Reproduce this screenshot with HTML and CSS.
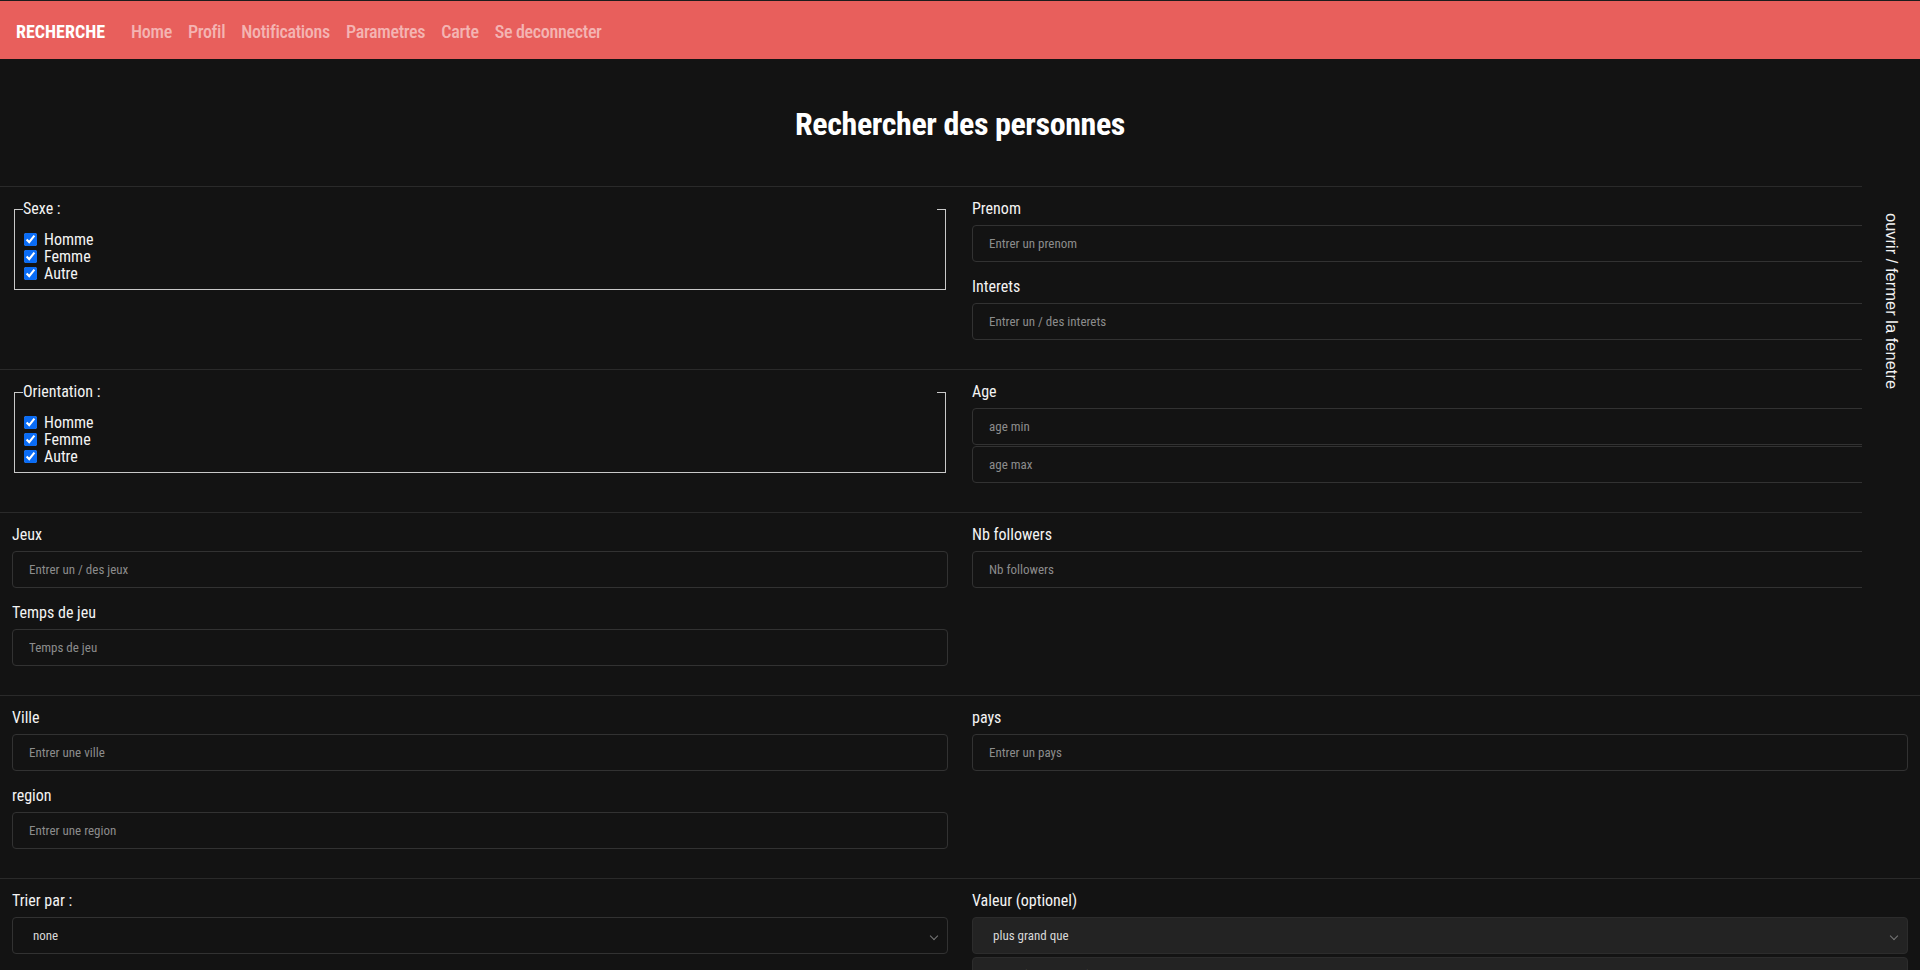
FILE: index.html
```html
<!DOCTYPE html>
<html lang="fr">
<head>
<meta charset="utf-8">
<title>Recherche</title>
<link rel="stylesheet" href="styles.css">
</head>
<body>
<nav class="topbar">
  <a class="brand" href="#">RECHERCHE</a>
  <ul class="nav-links">
    <li><a href="#">Home</a></li>
    <li><a href="#">Profil</a></li>
    <li><a href="#">Notifications</a></li>
    <li><a href="#">Parametres</a></li>
    <li><a href="#">Carte</a></li>
    <li><a href="#">Se deconnecter</a></li>
  </ul>
</nav>

<main class="page">
  <div class="title-wrap"><h1 class="title">Rechercher des personnes</h1></div>

  <section class="row">
    <div class="col">
      <fieldset class="checks">
        <legend>Sexe :</legend>
        <label class="check"><input type="checkbox" checked> Homme</label>
        <label class="check"><input type="checkbox" checked> Femme</label>
        <label class="check"><input type="checkbox" checked> Autre</label>
      </fieldset>
    </div>
    <div class="col">
      <div class="group">
        <label class="lbl">Prenom</label>
        <input class="field" type="text" placeholder="Entrer un prenom">
      </div>
      <div class="group">
        <label class="lbl">Interets</label>
        <input class="field" type="text" placeholder="Entrer un / des interets">
      </div>
    </div>
  </section>

  <section class="row">
    <div class="col">
      <fieldset class="checks">
        <legend>Orientation :</legend>
        <label class="check"><input type="checkbox" checked> Homme</label>
        <label class="check"><input type="checkbox" checked> Femme</label>
        <label class="check"><input type="checkbox" checked> Autre</label>
      </fieldset>
    </div>
    <div class="col">
      <div class="group">
        <label class="lbl">Age</label>
        <input class="field stack" type="text" placeholder="age min">
        <input class="field stack" type="text" placeholder="age max">
      </div>
    </div>
  </section>

  <section class="row">
    <div class="col">
      <div class="group">
        <label class="lbl">Jeux</label>
        <input class="field" type="text" placeholder="Entrer un / des jeux">
      </div>
      <div class="group">
        <label class="lbl">Temps de jeu</label>
        <input class="field" type="text" placeholder="Temps de jeu">
      </div>
    </div>
    <div class="col">
      <div class="group">
        <label class="lbl">Nb followers</label>
        <input class="field" type="text" placeholder="Nb followers">
      </div>
    </div>
  </section>

  <section class="row">
    <div class="col">
      <div class="group">
        <label class="lbl">Ville</label>
        <input class="field" type="text" placeholder="Entrer une ville">
      </div>
      <div class="group">
        <label class="lbl">region</label>
        <input class="field" type="text" placeholder="Entrer une region">
      </div>
    </div>
    <div class="col">
      <div class="group">
        <label class="lbl">pays</label>
        <input class="field" type="text" placeholder="Entrer un pays">
      </div>
    </div>
  </section>

  <section class="row">
    <div class="col">
      <div class="group">
        <label class="lbl">Trier par :</label>
        <div class="select">none</div>
      </div>
    </div>
    <div class="col">
      <div class="group">
        <label class="lbl">Valeur (optionel)</label>
        <div class="select filled">plus grand que</div>
        <input class="field filled second" type="text" placeholder="valeur (dans l'ordre)">
      </div>
    </div>
  </section>
</main>

<aside class="side-toggle">
  <span class="side-text">ouvrir / fermer la fenetre</span>
</aside>
</body>
</html>
```

FILE: styles.css
```css
* { box-sizing: border-box; }

html, body {
  margin: 0;
  padding: 0;
  background: #131313;
  color: #f2f2f2;
  font-family: "Roboto", "Liberation Sans", sans-serif;
  font-stretch: 75%;
  overflow: hidden;
  height: 970px;
}

.topbar {
  border-top: 1px solid #1c1c1c;
  height: 59px;
  background: #e85f5c;
  display: flex;
  align-items: center;
  padding: 2px 16px 0;
}

.brand {
  color: #ffffff;
  text-decoration: none;
  font-weight: bold;
  font-size: 18px;
  margin-right: 18px;
}

.nav-links {
  list-style: none;
  display: flex;
  margin: 0;
  padding: 0;
}

.nav-links a {
  display: block;
  padding: 0 8px;
  color: rgba(255, 255, 255, 0.55);
  text-decoration: none;
  font-size: 18px;
  font-weight: 500;
  letter-spacing: -0.3px;
}

.title-wrap {
  padding: 45px 0 42px;
  text-align: center;
}

.title {
  margin: 0;
  font-size: 32px;
  line-height: 40px;
  font-weight: bold;
  letter-spacing: -0.4px;
  color: #ffffff;
}

.row {
  border-top: 1px solid #2a2a2a;
  display: grid;
  grid-template-columns: 1fr 1fr;
  column-gap: 24px;
  padding: 12px 12px 14px;
}

.col { min-width: 0; }

.group {
  display: flex;
  flex-direction: column;
  margin-bottom: 15px;
}

.lbl {
  font-size: 16px;
  line-height: 20px;
  margin-bottom: 6px;
  color: #f4f4f4;
}

.field, .select {
  height: 37px;
  width: 100%;
  background: transparent;
  border: 1px solid #323232;
  border-radius: 4px;
  padding: 0 16px;
  font-family: inherit;
  font-stretch: 75%;
  font-size: 13px;
  color: #dddddd;
  outline: none;
}

.field::placeholder { color: #8c8c8c; }

.stack + .stack { margin-top: 1px; }

.select {
  display: flex;
  align-items: center;
  padding-left: 20px;
  position: relative;
  color: #d8d8d8;
}

.select::after {
  content: "";
  position: absolute;
  right: 10px;
  top: 15px;
  width: 5px;
  height: 5px;
  border-right: 1px solid #777;
  border-bottom: 1px solid #777;
  transform: rotate(45deg);
}

.filled {
  background: #232323;
  border-color: #2c2c2c;
}

.second { margin-top: 3px; }

.checks {
  margin: 0 2px;
  padding: 0 8px 7px;
  border: 1px solid #c9c9c9;
  min-width: 0;
}

.checks legend {
  width: 100%;
  padding: 0;
  font-size: 16px;
  line-height: 20px;
  margin-bottom: 12px;
  color: #f4f4f4;
}

.check {
  display: flex;
  align-items: center;
  height: 17px;
  font-size: 16px;
  color: #f4f4f4;
}

.check input {
  width: 13px;
  height: 13px;
  margin: 0 7px 0 1px;
  accent-color: #0a6cf5;
}

.side-toggle {
  position: absolute;
  top: 60px;
  right: 0;
  width: 58px;
  height: 544px;
  background: #131313;
  display: flex;
  justify-content: center;
  padding-top: 153px;
}

.side-text {
  writing-mode: vertical-rl;
  font-family: "Liberation Sans", Arial, sans-serif;
  font-stretch: normal;
  font-size: 16.5px;
  color: #f2f2f2;
}
```
